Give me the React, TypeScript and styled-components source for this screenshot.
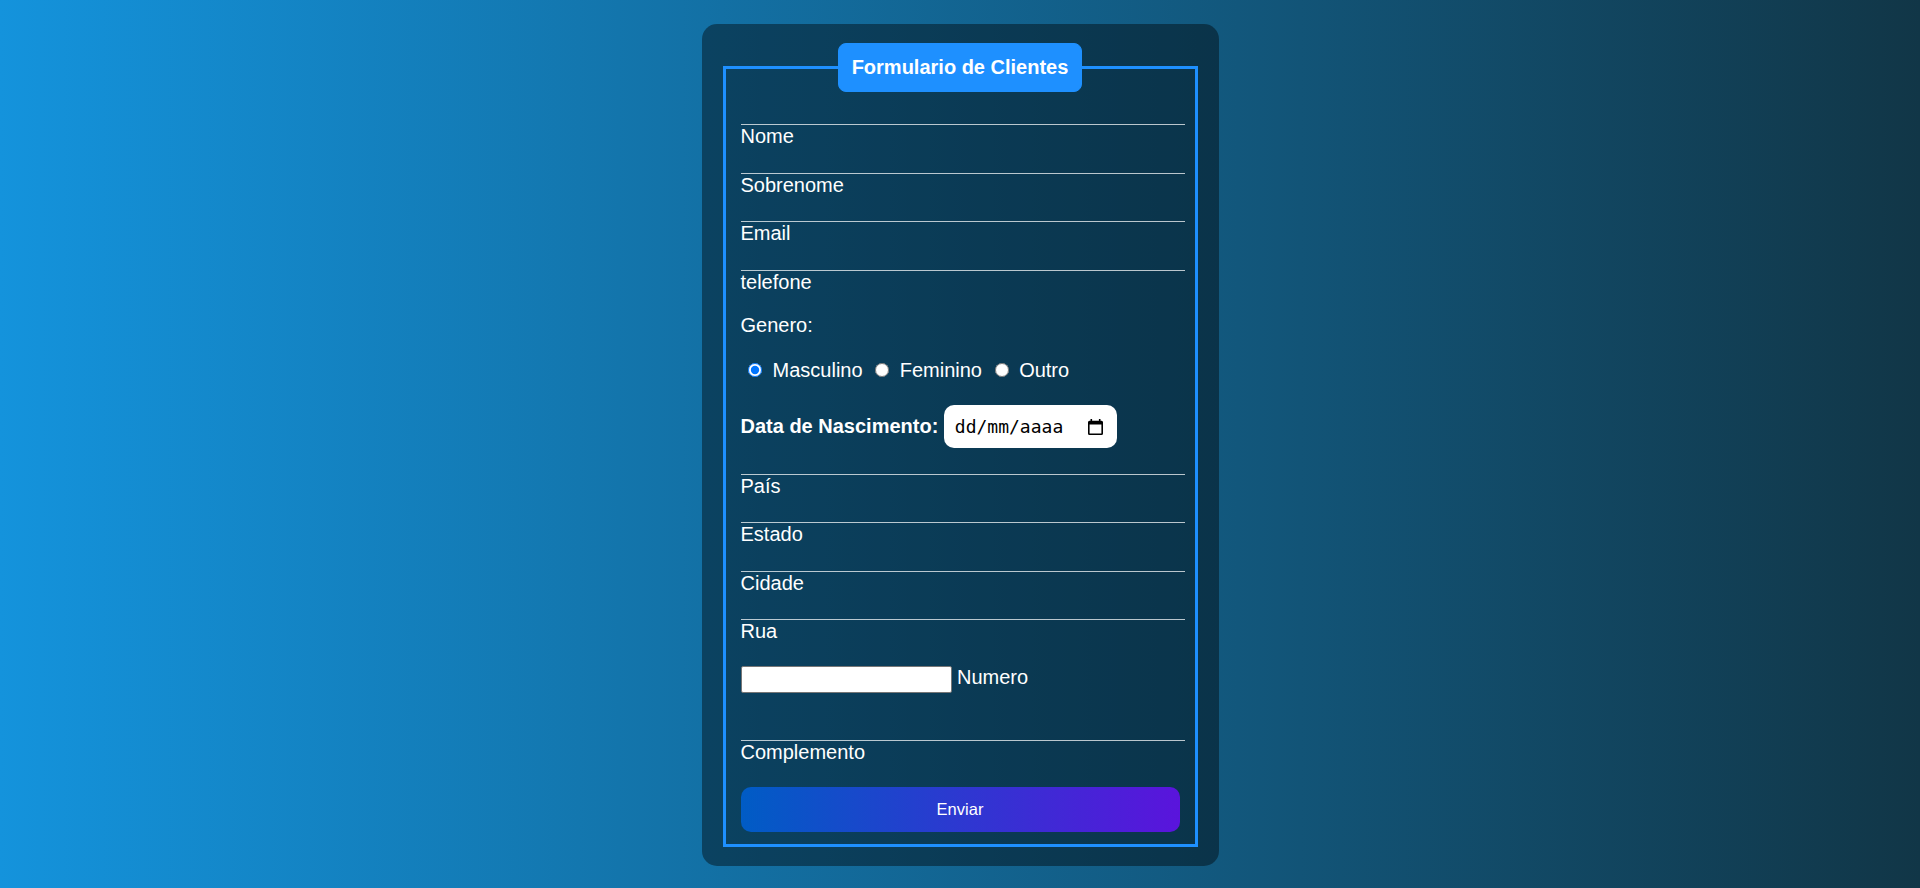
import styled, { createGlobalStyle } from 'styled-components';

const GlobalStyle = createGlobalStyle`
  html,
  body {
    margin: 0;
  }

  body {
    min-height: 100vh;
    background-image: linear-gradient(to right, rgb(20, 147, 220), rgb(17, 54, 71));
    font-family: 'Liberation Sans', Arial, Helvetica, sans-serif;
    color: white;
  }
`;

const Page = styled.main`
  min-height: 100vh;
  display: flex;
  align-items: center;
  justify-content: center;
`;

const Box = styled.div`
  background-color: rgba(0, 0, 0, 0.41);
  padding: 19px 21px;
  border-radius: 15px;
  width: 475px;
  margin-top: 2px;
`;

const Fieldset = styled.fieldset`
  margin: 0;
  min-width: 0;
  border: 3px solid dodgerblue;
  padding: 7.5px 15px 12px;
  display: flex;
  flex-direction: column;
`;

const Legend = styled.legend`
  margin: 0 auto;
  padding: 12px 13px;
  border: 1px solid dodgerblue;
  border-radius: 8px;
  background-color: dodgerblue;
  font-size: 20px;
  font-weight: 700;
  line-height: 23px;
`;

const Field = styled.div<{ $gap?: number }>`
  display: flex;
  flex-direction: column;
  margin-top: ${({ $gap }) => $gap ?? 0}px;
`;

const LineInput = styled.input`
  box-sizing: border-box;
  width: calc(100% + 5px);
  height: 25.5px;
  padding: 0 2px;
  background: none;
  border: none;
  border-bottom: 1px solid rgba(255, 255, 255, 0.72);
  outline: none;
  color: white;
  font-size: 15px;
  letter-spacing: 2px;
`;

const Label = styled.label<{ $bold?: boolean }>`
  font-size: 20px;
  line-height: 23px;
  font-weight: ${({ $bold }) => ($bold ? 700 : 400)};
  white-space: nowrap;
`;

const Text = styled.p<{ $gap?: number }>`
  margin: ${({ $gap }) => $gap ?? 0}px 0 0;
  font-size: 20px;
  line-height: 23px;
`;

const RadioRow = styled.div`
  margin-top: 22px;
  padding-left: 0.5px;
  font-size: 20px;
  line-height: 23px;
  white-space: nowrap;
`;

const Radio = styled.input`
  width: 14px;
  height: 14px;
  margin: 3px 5px 0 7px;
`;

const InlineRow = styled.div<{ $gap?: number; $center?: boolean }>`
  display: flex;
  align-items: ${({ $center }) => ($center ? 'center' : 'flex-start')};
  gap: 5.5px;
  margin-top: ${({ $gap }) => $gap ?? 0}px;
`;

const DateBox = styled.label`
  box-sizing: border-box;
  width: 173px;
  height: 43px;
  padding: 0 14px 0 11px;
  display: flex;
  align-items: center;
  justify-content: space-between;
  background: white;
  border-radius: 10px;
  color: #000;
`;

const DateInput = styled.input`
  width: 110px;
  padding: 0;
  border: none;
  outline: none;
  background: none;
  font-family: 'DejaVu Sans Mono', 'Liberation Mono', monospace;
  font-size: 18px;
  color: #000;

  &::placeholder {
    color: #000;
    opacity: 1;
  }
`;

const SmallInput = styled.input`
  box-sizing: border-box;
  width: 211px;
  height: 27px;
  padding: 1px 2px;
  border: 1px solid #767676;
  border-radius: 2px;
  background: white;
  font-size: 15px;
  outline: none;
`;

const Submit = styled.button`
  margin-top: 23.5px;
  width: 100%;
  height: 45px;
  border: none;
  border-radius: 10px;
  background-image: linear-gradient(to right, rgb(0, 92, 197), rgb(90, 20, 220));
  color: white;
  font-family: 'Liberation Sans', Arial, sans-serif;
  font-size: 16.5px;
  cursor: pointer;
`;

function CalendarIcon() {
  return (
    <svg width='15' height='16' viewBox='0 0 15 16' fill='#000'>
      <rect x='2.5' y='0' width='1.6' height='3' />
      <rect x='10.9' y='0' width='1.6' height='3' />
      <path
        fillRule='evenodd'
        d='M1.5 1.8h12A1.5 1.5 0 0 1 15 3.3v11.2A1.5 1.5 0 0 1 13.5 16h-12A1.5 1.5 0 0 1 0 14.5V3.3a1.5 1.5 0 0 1 1.5-1.5zM1.6 5.6v8.8h11.8V5.6z'
      />
    </svg>
  );
}

interface LineFieldProps {
  id: string;
  label: string;
  gap?: number;
  type?: string;
}

function LineField({ id, label, gap, type = 'text' }: LineFieldProps) {
  return (
    <Field $gap={gap}>
      <LineInput id={id} name={id} type={type} />
      <Label htmlFor={id}>{label}</Label>
    </Field>
  );
}

export default function App() {
  return (
    <>
      <GlobalStyle />
      <Page>
        <Box>
          <form onSubmit={e => e.preventDefault()}>
            <Fieldset>
              <Legend>Formulario de Clientes</Legend>
              <LineField id='nome' label='Nome' />
              <LineField id='sobrenome' label='Sobrenome' />
              <LineField id='email' label='Email' type='email' />
              <LineField id='telefone' label='telefone' type='tel' />

              <Text $gap={20}>Genero:</Text>
              <RadioRow>
                <Radio type='radio' id='masculino' name='genero' defaultChecked />{' '}
                <label htmlFor='masculino'>Masculino</label>{' '}
                <Radio type='radio' id='feminino' name='genero' />{' '}
                <label htmlFor='feminino'>Feminino</label>{' '}
                <Radio type='radio' id='outro' name='genero' />{' '}
                <label htmlFor='outro'>Outro</label>
              </RadioRow>

              <InlineRow $gap={23.5} $center>
                <Label $bold htmlFor='data_nascimento'>
                  Data de Nascimento:
                </Label>
                <DateBox>
                  <DateInput id='data_nascimento' placeholder='dd/mm/aaaa' />
                  <CalendarIcon />
                </DateBox>
              </InlineRow>

              <LineField id='pais' label='País' gap={1} />
              <LineField id='estado' label='Estado' />
              <LineField id='cidade' label='Cidade' />
              <LineField id='rua' label='Rua' />

              <InlineRow $gap={23}>
                <SmallInput id='numero' name='numero' />
                <Label htmlFor='numero'>Numero</Label>
              </InlineRow>

              <LineField id='complemento' label='Complemento' gap={22} />

              <Submit type='submit'>Enviar</Submit>
            </Fieldset>
          </form>
        </Box>
      </Page>
    </>
  );
}
